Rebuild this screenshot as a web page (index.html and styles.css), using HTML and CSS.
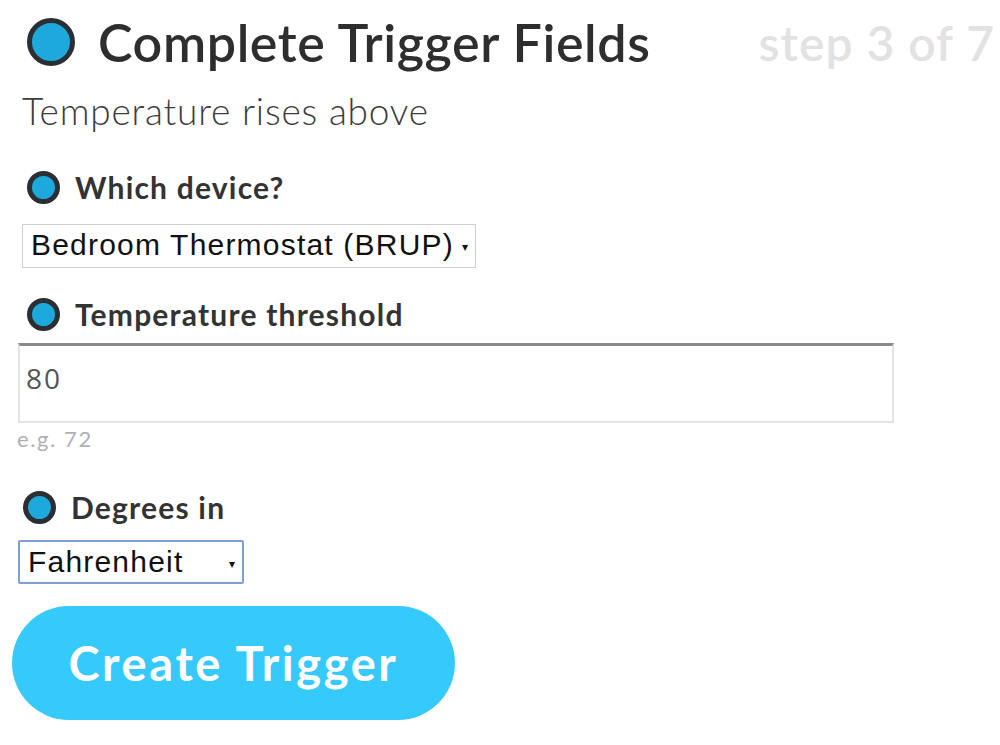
FILE: index.html
```html
<!DOCTYPE html>
<html>
<head>
    <title>Complete Trigger Fields</title>
    <meta charset=utf-8>
    <link rel="stylesheet" href="styles.css">
</head>
<body>
    <div id="wrap">
        <div class="head">
            <span class="dot big"></span>
            <h1>Complete Trigger Fields</h1>
            <span class="step">step 3 of 7</span>
        </div>
        <p class="sub">Temperature rises above</p>

        <div class="field f-device">
            <label class="lbl"><span class="dot"></span>Which device?</label>
            <div class="sel">Bedroom Thermostat (BRUP)<span class="arr">&#9662;</span></div>
        </div>

        <div class="field f-temp">
            <label class="lbl"><span class="dot"></span>Temperature threshold</label>
            <div class="txt">80</div>
            <div class="hint">e.g. 72</div>
        </div>

        <div class="field f-deg">
            <label class="lbl"><span class="dot"></span>Degrees in</label>
            <div class="sel focus">Fahrenheit<span class="arr">&#9662;</span></div>
        </div>

        <button class="go">Create Trigger</button>
    </div>
</body>
</html>
```

FILE: styles.css
```css
body{
    margin:0;
    background: #fff;
    font-family: Lato, "Open Sans", sans-serif;
}
#wrap{
    padding: 11px 0 0 22px;
    display: flex;
    flex-direction: column;
    align-items: flex-start;
}
.head{
    display: flex;
    align-items: center;
    width: 968px;
    margin-left: 5px;
}
.dot{
    display: inline-block;
    width: 23px;
    height: 23px;
    border-radius: 50%;
    background: #1ea9dd;
    border: 5px solid #2b2f33;
    flex: none;
}
.dot.big{
    width: 38px;
    height: 38px;
}
h1{
    margin: 0 0 0 23px;
    font-size: 52px;
    font-weight: 600;
    color: #2e2e2e;
    letter-spacing: 0.6px;
}
.step{
    margin-left: auto;
    font-size: 48px;
    font-weight: 600;
    color: #e2e2e2;
    letter-spacing: 1px;
}
.sub{
    margin: 15px 0 0 0;
    font-size: 37px;
    font-weight: 300;
    color: #3c3c3c;
    letter-spacing: 0.8px;
}
.field{
    display: flex;
    flex-direction: column;
    align-items: flex-start;
}
.lbl{
    display: flex;
    align-items: center;
    gap: 15px;
    font-size: 30px;
    font-weight: 700;
    color: #333;
    letter-spacing: 1.2px;
    margin-left: 5px;
}
.f-device{ margin-top: 36px; }
.f-temp{ margin-top: 28px; }
.f-deg{ margin-top: 37px; margin-left: -4px; }
.sel{
    margin-top: 19px;
    font-family: "Liberation Sans", Arial, sans-serif;
    font-size: 30px;
    letter-spacing: 1.2px;
    color: #111;
    border: 1px solid #cfcfcf;
    padding: 3px 6px 5px 8px;
    display: flex;
    align-items: center;
}
.f-deg .sel{ margin-top: 15px; width: 208px; padding: 3px 6px 3px 8px; }
.sel.focus{
    border: 2px solid #7d9fd6;
    border-radius: 2px;
}
.arr{
    font-size: 12px;
    margin-left: 8px;
    margin-top: 4px;
}
.f-deg .arr{ margin-left: auto; }
.txt{
    box-sizing: border-box;
    margin: 11px 0 0 -4px;
    width: 876px;
    height: 80px;
    border: 2px solid #e4e4e4;
    border-top: 3px solid #8a8a8a;
    padding: 13px 0 0 6px;
    font-size: 28px;
    letter-spacing: 2px;
    color: #555;
    font-family: "Open Sans", sans-serif;
}
.hint{
    margin: 2px 0 0 -5px;
    font-size: 22px;
    letter-spacing: 1.6px;
    color: #b0b0b0;
}
.go{
    margin: 22px 0 0 -10px;
    width: 443px;
    height: 114px;
    border: none;
    border-radius: 57px;
    background: #36c9fb;
    color: #fff;
    font-family: Lato, sans-serif;
    font-size: 47px;
    font-weight: 700;
    letter-spacing: 2.6px;
    padding: 0;
}
```
